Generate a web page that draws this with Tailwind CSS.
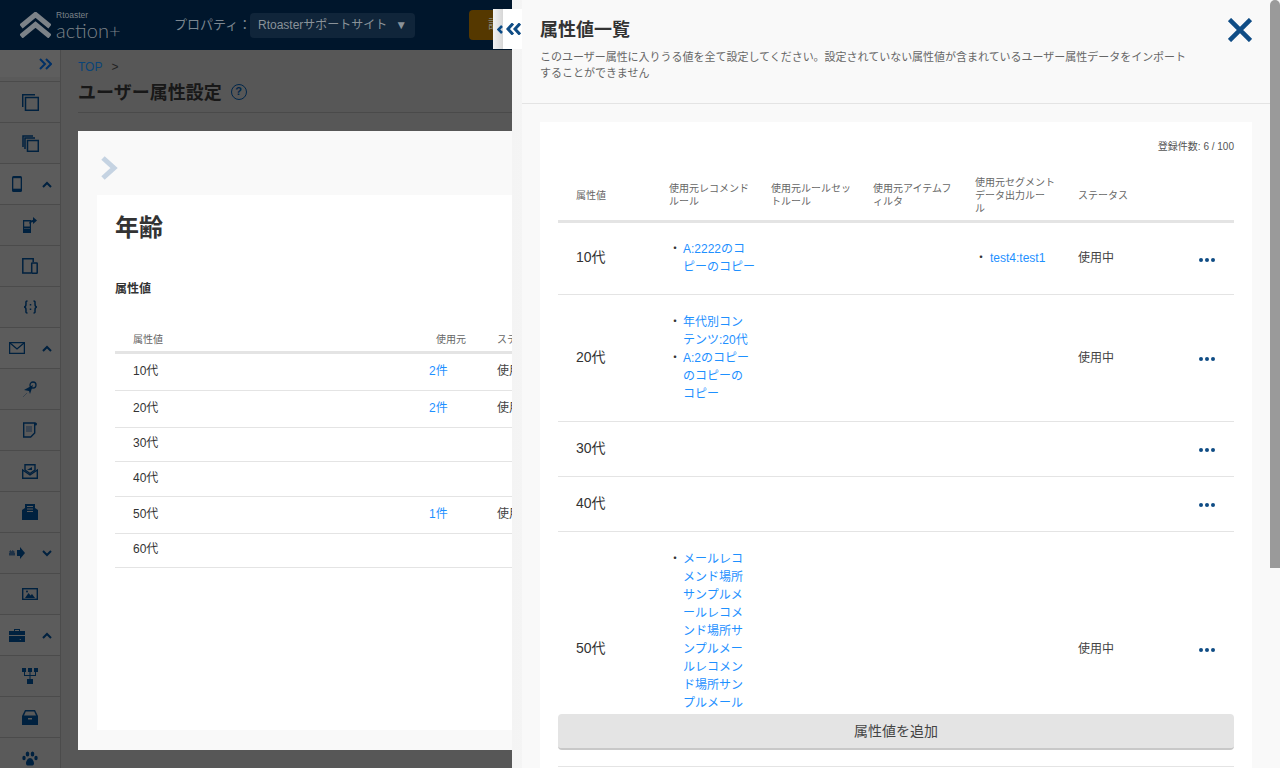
<!DOCTYPE html>
<html lang="ja">

<head>
    <meta charset="UTF-8">
    <meta name="viewport" content="width=device-width, initial-scale=1.0">
    <title>属性値一覧</title>
    <script src="https://cdn.jsdelivr.net/npm/@tailwindcss/browser@4"></script>
</head>

<body class="bg-[#575757]">
    <div class="relative w-[1280px] h-[768px] overflow-hidden font-['Liberation_Sans','Noto_Sans_CJK_JP',sans-serif]">

        <!-- page under the overlay -->
        <header class="h-[50px] bg-[#00162c] flex items-center">
            <div class="w-[174px] shrink-0 h-full flex items-center pl-[20px]">
                <svg width="31" height="26" viewBox="0 0 31 26" fill="none" stroke="#7c8288" stroke-width="5">
                    <path d="M1 14.500L15.500 2.500 30 14.500" />
                    <path d="M1 24.500L15.500 12.500 30 24.500" />
                </svg>
                <div class="ml-[5px] text-[#7c8288] leading-none">
                    <div class="text-[8.500px] leading-[9px]">Rtoaster</div>
                    <div class="text-[20px] leading-[20px] font-['Lato',sans-serif] font-light">action+</div>
                </div>
            </div>
            <span class="text-[13px] text-[#7c8790] w-[76px] shrink-0 whitespace-nowrap">プロパティ：</span>
            <div class="w-[165px] h-[25px] rounded bg-[#10253a] flex items-center pl-[8px] text-[12px] text-[#8a9299]">
                Rtoasterサポートサイト<span class="ml-[8px] text-[12px]">▼</span>
            </div>
            <div class="ml-[54px] w-[60px] h-[30px] rounded-sm bg-[#553800] text-[#8a8a80] text-[12px] flex items-center pl-[19px]">設定</div>
        </header>

        <div class="flex h-[718px]">
            <nav class="w-[61px] shrink-0 bg-[#5a5a5a] border-r border-[#4b4b4b] text-[#00213f]">
                <div class="h-[27px] flex items-center justify-end pr-[8px] bg-[#5e5e5e]">
                    <svg width="13" height="12" viewBox="0 0 13 12" fill="none" stroke="#003066" stroke-width="2"><path d="M1 1l5 5-5 5M7 1l5 5-5 5" /></svg>
                </div>
                <div class="h-[5px] border-b border-[#4b4b4b]"></div>
                <div class="h-[41px] border-b border-[#4b4b4b] flex items-center justify-center">
                    <svg width="17" height="17" viewBox="0 0 17 17" fill="none" stroke="#00213f" stroke-width="1.500"><path d="M.7 13V.7H13" /><rect x="3.500" y="3.500" width="12.800" height="12.800" /></svg>
                </div>
                <div class="h-[41px] border-b border-[#4b4b4b] flex items-center justify-center">
                    <svg width="17" height="17" viewBox="0 0 17 17" fill="none" stroke="#00213f" stroke-width="1.500"><path d="M1 12V1h10M3 14V3h10" /><rect x="5.500" y="5.500" width="10.800" height="10.800" /></svg>
                </div>
                <div class="h-[41px] border-b border-[#4b4b4b] flex items-center pl-[12px] bg-[#5c5c5c]">
                    <svg width="10" height="16" viewBox="0 0 10 16"><rect width="10" height="16" rx="1.500" fill="#00213f" /><rect x="1.300" y="2.200" width="7.400" height="10.500" fill="#5c5c5c" /></svg>
                    <svg class="ml-[20px]" width="10" height="7" viewBox="0 0 10 7" fill="none" stroke="#00213f" stroke-width="2"><path d="M1 6l4-4 4 4" /></svg>
                </div>
                <div class="h-[41px] border-b border-[#4b4b4b] flex items-center justify-center">
                    <svg width="14" height="16" viewBox="0 0 14 16"><path d="M0 3h8v13H0z" fill="#00213f" /><rect x="1.200" y="4.500" width="5.600" height="5" fill="#5a5a5a" /><path d="M1.500 11h1v1h-1zM3.500 11h1v1h-1zM5.500 11h1v1h-1z" fill="#5a5a5a" /><path d="M6 7c0-2 2-4 4-4V0l4 3.500L10 7V5C8.500 5 7 6 6 7z" fill="#00213f" /></svg>
                </div>
                <div class="h-[41px] border-b border-[#4b4b4b] flex items-center justify-center">
                    <svg width="16" height="16" viewBox="0 0 16 16" fill="none" stroke="#00213f" stroke-width="1.500"><path d="M9 15H.8V.8h10.400V4" /><rect x="9.700" y="5" width="5.500" height="10.200" rx=".5" /></svg>
                </div>
                <div class="h-[41px] border-b border-[#4b4b4b] flex items-center justify-center">
                    <svg width="15" height="14" viewBox="0 0 15 14" fill="none" stroke="#00213f" stroke-width="1.500"><path d="M4.500 1C2.500 1 3 2.500 3 4 3 6 2.500 7 1 7c1.500 0 2 1 2 3 0 1.500-.5 3 1.500 3M10.500 1c2 0 1.500 1.500 1.500 3 0 2 .5 3 2 3-1.500 0-2 1-2 3 0 1.500.5 3-1.500 3" /><path d="M7.500 4v1.500M7.500 8.500V10" /></svg>
                </div>
                <div class="h-[41px] border-b border-[#4b4b4b] flex items-center pl-[9px] bg-[#5c5c5c]">
                    <svg width="16" height="12" viewBox="0 0 16 12" fill="none" stroke="#00213f" stroke-width="1.300"><rect x=".6" y=".6" width="14.800" height="10.800" /><path d="M1 1l7 6 7-6" /></svg>
                    <svg class="ml-[17px]" width="10" height="7" viewBox="0 0 10 7" fill="none" stroke="#00213f" stroke-width="2"><path d="M1 6l4-4 4 4" /></svg>
                </div>
                <div class="h-[41px] border-b border-[#4b4b4b] flex items-center justify-center">
                    <svg width="14" height="16" viewBox="0 0 14 16"><circle cx="10" cy="4" r="3" fill="none" stroke="#00213f" stroke-width="1.300" /><path d="M1 9l9-5-3 9-1-3z" fill="#00213f" /><path d="M0 16l4-4" stroke="#3a4550" /></svg>
                </div>
                <div class="h-[41px] border-b border-[#4b4b4b] flex items-center justify-center">
                    <svg width="14" height="16" viewBox="0 0 14 16"><path d="M.7 1h11v10l-4 4H.7z" fill="none" stroke="#00213f" stroke-width="1.400" /><rect x="3" y="4" width="6" height="6" fill="#3a4552" /><circle cx="12.500" cy="2" r="1.500" fill="#00213f" /></svg>
                </div>
                <div class="h-[41px] border-b border-[#4b4b4b] flex items-center justify-center">
                    <svg width="16" height="15" viewBox="0 0 16 15"><path d="M.7 6v8.300h14.600V6L8 11z" fill="none" stroke="#00213f" stroke-width="1.400" /><path d="M3 6V.7h10V6L8 9.500z" fill="none" stroke="#00213f" stroke-width="1.400" /><path d="M5 6l5-3 0 3z" fill="#00213f" /></svg>
                </div>
                <div class="h-[41px] border-b border-[#4b4b4b] flex items-center justify-center">
                    <svg width="16" height="16" viewBox="0 0 16 16"><path d="M0 6l3-2V0h10v4l3 2v10H0z" fill="#00213f" /><path d="M5 2h6v1H5zM5 4.500h6v1H5zM5 7h6v1H5z" fill="#5a5a5a" /></svg>
                </div>
                <div class="h-[41px] border-b border-[#4b4b4b] flex items-center pl-[9px]">
                    <svg width="16" height="12" viewBox="0 0 16 12"><path d="M8 3h3V0l5 6-5 6V9H8z" fill="#00213f" /><path d="M0 5l1.500-2 1 1.500L3.500 3 6 5 5 6h1v2.500H0V6h1z" fill="#1e3247" /></svg>
                    <svg class="ml-[17px]" width="10" height="7" viewBox="0 0 10 7" fill="none" stroke="#00213f" stroke-width="2"><path d="M1 1l4 4 4-4" /></svg>
                </div>
                <div class="h-[41px] border-b border-[#4b4b4b] flex items-center justify-center">
                    <svg width="16" height="12" viewBox="0 0 16 12"><rect x=".7" y=".7" width="14.600" height="10.600" fill="none" stroke="#00213f" stroke-width="1.400" /><path d="M3 10l3.500-5 2 2.500 1.500-1.500 3 4z" fill="#00213f" /><circle cx="5" cy="3.500" r="1" fill="#00213f" /></svg>
                </div>
                <div class="h-[41px] border-b border-[#4b4b4b] flex items-center pl-[9px] bg-[#5c5c5c]">
                    <svg width="16" height="14" viewBox="0 0 16 14"><path d="M5 3V1h6v2h5v4H0V3zM6 2v1h4V2zM0 8h16v6H0zM10 11l2 1v-1z" fill="#00213f" /></svg>
                    <svg class="ml-[17px]" width="10" height="7" viewBox="0 0 10 7" fill="none" stroke="#00213f" stroke-width="2"><path d="M1 6l4-4 4 4" /></svg>
                </div>
                <div class="h-[41px] border-b border-[#4b4b4b] flex items-center justify-center">
                    <svg width="16" height="16" viewBox="0 0 16 16" fill="#00213f"><rect width="4" height="4" /><rect x="6" width="4" height="4" /><rect x="12" width="4" height="4" /><path d="M2 4h1v3h4.500V4h1v3H13V4h1v4H8.500v3h-1V8H2z" /><rect x="5" y="11" width="6" height="5" /></svg>
                </div>
                <div class="h-[41px] border-b border-[#4b4b4b] flex items-center justify-center">
                    <svg width="16" height="15" viewBox="0 0 16 15"><path d="M3 0h10l3 6v9H0V6zM3.800 1.500L2 5.500h12l-1.800-4z" fill="#00213f" fill-rule="evenodd" /><rect x="6" y="8" width="4" height="1.500" fill="#5a5a5a" /></svg>
                </div>
                <div class="h-[41px] flex items-center justify-center">
                    <svg width="16" height="16" viewBox="0 0 16 16" fill="#00213f"><ellipse cx="2" cy="7" rx="1.700" ry="2.200" /><ellipse cx="5.500" cy="3" rx="1.800" ry="2.500" /><ellipse cx="10.500" cy="3" rx="1.800" ry="2.500" /><ellipse cx="14" cy="7" rx="1.700" ry="2.200" /><path d="M8 7c-2 0-4 3-4 5.500C4 15 6.500 14.500 8 14.500s4 .500 4-2C12 10 10 7 8 7z" /></svg>
                </div>
            </nav>

            <main class="flex-1 pl-[17px] pt-[10px]">
                <div class="text-[12px] leading-[14px] text-[#222]"><span class="text-[#0a4478]">TOP</span><span class="ml-[9px]">&gt;</span></div>
                <div class="mt-[8px] h-[31px] border-b border-[#4a4a4a] flex items-start">
                    <h1 class="text-[18px] leading-[22px] font-bold text-[#181818]">ユーザー属性設定</h1>
                    <span class="ml-[9px] mt-[2px] w-[16px] h-[16px] rounded-full border-[1.500px] border-[#00264a] text-[#00264a] text-[11px] leading-[13px] font-bold text-center">?</span>
                </div>
            </main>
        </div>

        <!-- first drawer -->
        <section class="absolute left-[78px] top-[131px] w-[450px] h-[619px] bg-[#f9f9f9] pl-[19px] pb-[20px] flex flex-col">
            <div class="h-[64px] shrink-0 flex items-center pl-[4px] pt-[10px]">
                <svg width="17" height="24" viewBox="0 0 17 24" fill="none" stroke="#c5d3e2" stroke-width="5"><path d="M2 2l11 10L2 22" /></svg>
            </div>
            <div class="flex-1 bg-white pl-[18px]">
                <h2 class="mt-[19px] text-[24px] leading-[28px] font-bold text-[#333]">年齢</h2>
                <h3 class="mt-[39px] text-[12px] leading-[16px] font-bold text-[#333]">属性値</h3>
                <table class="mt-[35px] w-[397px] table-fixed text-[12px] text-[#333]">
                    <colgroup><col class="w-[300px]"><col class="w-[82px]"><col></colgroup>
                    <thead>
                        <tr class="h-[20px] border-b-[3px] border-[#e4e4e4] text-[10px] text-[#666] font-normal align-top">
                            <td class="pl-[18px]">属性値</td>
                            <td class="pl-[21px]">使用元</td>
                            <td class="whitespace-nowrap">ステータス</td>
                        </tr>
                    </thead>
                    <tbody class="[&_td]:pb-[2px]">
                        <tr class="h-[38px] border-b border-[#e4e4e4]"><td class="pl-[18px]">10代</td><td class="pl-[14px] text-[#1e90ff]">2件</td><td class="whitespace-nowrap text-[#444]">使用中</td></tr>
                        <tr class="h-[37px] border-b border-[#e4e4e4]"><td class="pl-[18px]">20代</td><td class="pl-[14px] text-[#1e90ff]">2件</td><td class="whitespace-nowrap text-[#444]">使用中</td></tr>
                        <tr class="h-[34px] border-b border-[#e4e4e4]"><td class="pl-[18px]">30代</td><td></td><td></td></tr>
                        <tr class="h-[35px] border-b border-[#e4e4e4]"><td class="pl-[18px]">40代</td><td></td><td></td></tr>
                        <tr class="h-[37px] border-b border-[#e4e4e4]"><td class="pl-[18px]">50代</td><td class="pl-[14px] text-[#1e90ff]">1件</td><td class="whitespace-nowrap text-[#444]">使用中</td></tr>
                        <tr class="h-[34px] border-b border-[#e4e4e4]"><td class="pl-[18px]">60代</td><td></td><td></td></tr>
                    </tbody>
                </table>
            </div>
        </section>

        <!-- drawer tabs -->
        <div class="absolute left-[493px] top-[9px] w-[29px] h-[40px] flex items-center bg-[linear-gradient(90deg,#f2f2f2,#d8d8d8_33%,#fff_34%)] z-20">
            <svg class="ml-[4px]" width="6" height="9" viewBox="0 0 6 9" fill="none" stroke="#0a4a86" stroke-width="2.500"><path d="M5 1L1.500 4.500 5 8" /></svg>
            <svg class="ml-[3px]" width="15" height="12" viewBox="0 0 15 12" fill="none" stroke="#0f4c85" stroke-width="3"><path d="M7 .5L2 6l5 5.500M14 .5L9 6l5 5.500" /></svg>
        </div>

        <!-- second drawer -->
        <section class="absolute left-[512px] top-0 w-[768px] h-[768px] flex bg-[linear-gradient(90deg,#f4f4f4,#fff_30%,#e2e2e2)] z-10">
            <div class="ml-[10px] flex-1 bg-[#f9f9f9] overflow-hidden">
                <div class="h-[104px] border-b border-[#e4e4e4] pl-[18px] pt-[19px] relative">
                    <h2 class="text-[18px] leading-[22px] font-bold text-[#333]">属性値一覧</h2>
                    <p class="mt-[8px] text-[11px] leading-[16px] tracking-[-0.02px] text-[#666]">このユーザー属性に入りうる値を全て設定してください。設定されていない属性値が含まれているユーザー属性データをインポート<br>することができません</p>
                    <svg class="absolute left-[706px] top-[18px]" width="24" height="24" viewBox="0 0 24 24" fill="none" stroke="#0f4c85" stroke-width="4.500"><path d="M1.500 1.500l21 21M22.500 1.500l-21 21" /></svg>
                </div>
                <div class="relative ml-[18px] mt-[18px] w-[712px] h-[700px] bg-white px-[18px] pt-[19px]">
                    <div class="text-right text-[10px] leading-[12px] text-[#555]">登録件数: 6 / 100</div>
                    <table class="mt-[16px] w-[676px] table-fixed text-[12px] text-[#333]">
                        <colgroup>
                            <col class="w-[93px]"><col class="w-[102px]"><col class="w-[102px]"><col class="w-[102px]"><col class="w-[103px]"><col class="w-[102px]"><col>
                        </colgroup>
                        <thead>
                            <tr class="h-[52px] border-b-[3px] border-[#e4e4e4] text-[10px] leading-[13px] text-[#666]">
                                <td class="pl-[18px] pt-[2px]">属性値</td>
                                <td class="pl-[18px] pt-[2px]">使用元レコメンド<br>ルール</td>
                                <td class="pl-[18px] pt-[2px]">使用元ルールセッ<br>トルール</td>
                                <td class="pl-[18px] pt-[2px]">使用元アイテムフ<br>ィルタ</td>
                                <td class="pl-[18px] pt-[2px]">使用元セグメント<br>データ出力ルー<br>ル</td>
                                <td class="pl-[18px] pt-[2px]">ステータス</td>
                                <td></td>
                            </tr>
                        </thead>
                        <tbody>
                            <tr class="h-[73px] border-b border-[#e4e4e4]">
                                <td class="pl-[18px] pb-[1px] text-[14px]">10代</td>
                                <td class="pl-[18px] leading-[18px]"><div class="flex"><span class="w-[14px] shrink-0">・</span><span class="text-[#1e90ff] whitespace-nowrap">A:2222のコ<br>ピーのコピー</span></div></td>
                                <td></td><td></td>
                                <td class="pl-[18px] leading-[18px]"><div class="flex"><span class="w-[15px] shrink-0">・</span><span class="text-[#1e90ff]">test4:test1</span></div></td>
                                <td class="pl-[18px] text-[#444]">使用中</td>
                                <td class="text-center pl-[18px]"><span class="inline-flex gap-[2px] mt-[2px] align-middle"><i class="w-[4px] h-[4px] rounded-full bg-[#0f4c85]"></i><i class="w-[4px] h-[4px] rounded-full bg-[#0f4c85]"></i><i class="w-[4px] h-[4px] rounded-full bg-[#0f4c85]"></i></span></td>
                            </tr>
                            <tr class="h-[127px] border-b border-[#e4e4e4]">
                                <td class="pl-[18px] text-[14px]">20代</td>
                                <td class="pl-[18px] leading-[18px]">
                                    <div class="flex"><span class="w-[14px] shrink-0">・</span><span class="text-[#1e90ff] whitespace-nowrap">年代別コン<br>テンツ:20代</span></div>
                                    <div class="flex"><span class="w-[14px] shrink-0">・</span><span class="text-[#1e90ff] whitespace-nowrap">A:2のコピー<br>のコピーの<br>コピー</span></div>
                                </td>
                                <td></td><td></td><td></td>
                                <td class="pl-[18px] text-[#444]">使用中</td>
                                <td class="text-center pl-[18px]"><span class="inline-flex gap-[2px] mt-[2px] align-middle"><i class="w-[4px] h-[4px] rounded-full bg-[#0f4c85]"></i><i class="w-[4px] h-[4px] rounded-full bg-[#0f4c85]"></i><i class="w-[4px] h-[4px] rounded-full bg-[#0f4c85]"></i></span></td>
                            </tr>
                            <tr class="h-[55px] border-b border-[#e4e4e4]">
                                <td class="pl-[18px] text-[14px]">30代</td>
                                <td></td><td></td><td></td><td></td><td></td>
                                <td class="text-center pl-[18px]"><span class="inline-flex gap-[2px] mt-[2px] align-middle"><i class="w-[4px] h-[4px] rounded-full bg-[#0f4c85]"></i><i class="w-[4px] h-[4px] rounded-full bg-[#0f4c85]"></i><i class="w-[4px] h-[4px] rounded-full bg-[#0f4c85]"></i></span></td>
                            </tr>
                            <tr class="h-[55px] border-b border-[#e4e4e4]">
                                <td class="pl-[18px] text-[14px]">40代</td>
                                <td></td><td></td><td></td><td></td><td></td>
                                <td class="text-center pl-[18px]"><span class="inline-flex gap-[2px] mt-[2px] align-middle"><i class="w-[4px] h-[4px] rounded-full bg-[#0f4c85]"></i><i class="w-[4px] h-[4px] rounded-full bg-[#0f4c85]"></i><i class="w-[4px] h-[4px] rounded-full bg-[#0f4c85]"></i></span></td>
                            </tr>
                            <tr class="h-[235px] border-b border-[#e4e4e4]">
                                <td class="pl-[18px] text-[14px]">50代</td>
                                <td class="pl-[18px] leading-[18px]"><div class="flex"><span class="w-[14px] shrink-0">・</span><span class="text-[#1e90ff] whitespace-nowrap">メールレコ<br>メンド場所<br>サンプルメ<br>ールレコメ<br>ンド場所サ<br>ンプルメー<br>ルレコメン<br>ド場所サン<br>プルメール<br>レコメンド<br>場所</span></div></td>
                                <td></td><td></td><td></td>
                                <td class="pl-[18px] text-[#444]">使用中</td>
                                <td class="text-center pl-[18px]"><span class="inline-flex gap-[2px] mt-[2px] align-middle"><i class="w-[4px] h-[4px] rounded-full bg-[#0f4c85]"></i><i class="w-[4px] h-[4px] rounded-full bg-[#0f4c85]"></i><i class="w-[4px] h-[4px] rounded-full bg-[#0f4c85]"></i></span></td>
                            </tr>
                        </tbody>
                    </table>
                    <button class="absolute left-[18px] top-[592px] w-[676px] h-[36px] rounded-sm bg-[#e4e4e4] border-b-2 border-[#c8c8c8] text-[14px] text-[#444]">属性値を追加</button>
                </div>
            </div>
            <div class="absolute right-0 top-0 w-[10px] h-[568px] rounded-t-full bg-[#9a9a9a]"></div>
        </section>
    </div>
</body>

</html>
